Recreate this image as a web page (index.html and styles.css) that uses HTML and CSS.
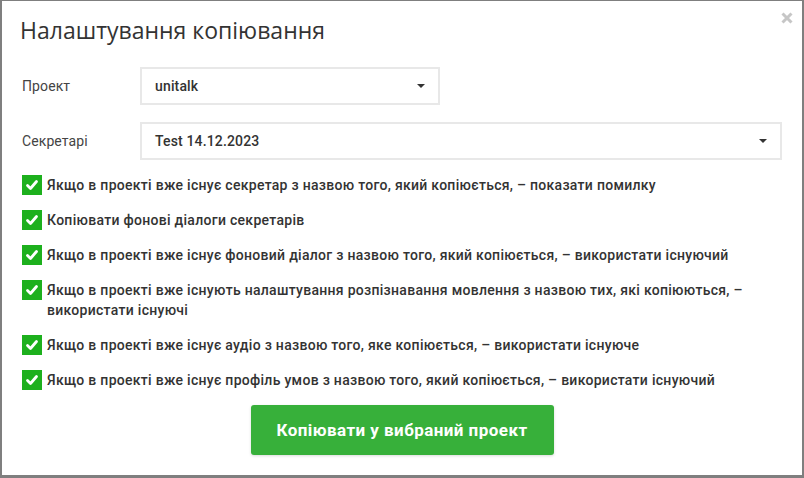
FILE: index.html
```html
<!DOCTYPE html>
<html lang="uk">
<head>
<meta charset="utf-8">
<title>Налаштування копіювання</title>
<link rel="stylesheet" href="styles.css">
</head>
<body>
<div class="modal">
  <div class="modal-header">
    <h1 class="modal-title">Налаштування копіювання</h1>
    <span class="close"><svg viewBox="0 0 12 12" width="12" height="12"><path d="M1.5 1.5l9 9M10.5 1.5l-9 9" stroke="#c6c6c6" stroke-width="3" stroke-linecap="butt"/></svg></span>
  </div>
  <div class="form-row">
    <label class="form-label">Проект</label>
    <div class="select select-short"><span>unitalk</span><i class="caret"></i></div>
  </div>
  <div class="form-row">
    <label class="form-label">Секретарі</label>
    <div class="select select-wide"><span>Test 14.12.2023</span><i class="caret"></i></div>
  </div>
  <ul class="checks">
    <li class="check"><span class="box"><svg viewBox="0 0 20 20" width="20" height="20"><path d="M5.5 10.5l3 3 6-7" fill="none" stroke="#fff" stroke-width="2.8" stroke-linecap="round" stroke-linejoin="round"/></svg></span><span class="check-text">Якщо в проекті вже існує секретар з назвою того, який копіюється, – показати помилку</span></li>
    <li class="check"><span class="box"><svg viewBox="0 0 20 20" width="20" height="20"><path d="M5.5 10.5l3 3 6-7" fill="none" stroke="#fff" stroke-width="2.8" stroke-linecap="round" stroke-linejoin="round"/></svg></span><span class="check-text">Копіювати фонові діалоги секретарів</span></li>
    <li class="check"><span class="box"><svg viewBox="0 0 20 20" width="20" height="20"><path d="M5.5 10.5l3 3 6-7" fill="none" stroke="#fff" stroke-width="2.8" stroke-linecap="round" stroke-linejoin="round"/></svg></span><span class="check-text">Якщо в проекті вже існує фоновий діалог з назвою того, який копіюється, – використати існуючий</span></li>
    <li class="check"><span class="box"><svg viewBox="0 0 20 20" width="20" height="20"><path d="M5.5 10.5l3 3 6-7" fill="none" stroke="#fff" stroke-width="2.8" stroke-linecap="round" stroke-linejoin="round"/></svg></span><span class="check-text">Якщо в проекті вже існують налаштування розпізнавання мовлення з назвою тих, які копіюються, –<br>використати існуючі</span></li>
    <li class="check"><span class="box"><svg viewBox="0 0 20 20" width="20" height="20"><path d="M5.5 10.5l3 3 6-7" fill="none" stroke="#fff" stroke-width="2.8" stroke-linecap="round" stroke-linejoin="round"/></svg></span><span class="check-text">Якщо в проекті вже існує аудіо з назвою того, яке копіюється, – використати існуюче</span></li>
    <li class="check"><span class="box"><svg viewBox="0 0 20 20" width="20" height="20"><path d="M5.5 10.5l3 3 6-7" fill="none" stroke="#fff" stroke-width="2.8" stroke-linecap="round" stroke-linejoin="round"/></svg></span><span class="check-text">Якщо в проекті вже існує профіль умов з назвою того, який копіюється, – використати існуючий</span></li>
  </ul>
  <div class="actions">
    <button class="btn">Копіювати у вибраний проект</button>
  </div>
</div>
</body>
</html>
```

FILE: styles.css
```css
* { box-sizing: border-box; }
html, body { margin: 0; padding: 0; }
body {
  background: #7f7f7f;
  font-family: Roboto, "Noto Sans", sans-serif;
  color: #333;
  width: 804px;
  height: 478px;
  overflow: hidden;
  padding: 1px 2px 0 2px;
}
.modal {
  position: relative;
  width: 800px;
  height: 474px;
  background: #fff;
  padding: 0 20px;
}
.modal-header {
  height: 66px;
  display: flex;
  align-items: center;
}
.modal-title {
  margin: 0 0 0 -2px;
  margin-top: -9px;
  font-family: "Open Sans", "Liberation Sans", sans-serif;
  font-weight: 400;
  font-size: 23px;
  color: #333;
  line-height: 30px;
}
.close {
  position: absolute;
  right: 9px;
  top: 11px;
  width: 12px;
  height: 12px;
}
.close svg { display: block; }
.form-row {
  display: flex;
  align-items: center;
  margin-bottom: 17px;
}
.form-label {
  width: 118px;
  font-size: 14px;
  color: #444;
  letter-spacing: 0.1px;
}
.select {
  height: 38px;
  border: 2px solid #e8e8e8;
  display: flex;
  align-items: center;
  justify-content: space-between;
  padding: 0 13px 0 13px;
  font-size: 14px;
  font-weight: 500;
  letter-spacing: 0.15px;
  color: #333;
}
.select-short { width: 300px; }
.select-wide { flex: 1; }
.caret {
  width: 0;
  height: 0;
  border-left: 4px solid transparent;
  border-right: 4px solid transparent;
  border-top: 4px solid #333;
}
.checks {
  list-style: none;
  margin: 0;
  padding: 0;
  margin-top: -2px;
}
.check {
  display: flex;
  align-items: flex-start;
  margin-bottom: 15px;
  font-size: 14px;
  font-weight: 500;
  line-height: 20px;
  letter-spacing: 0.29px;
  color: #333;
}
.box {
  flex: none;
  width: 20px;
  height: 20px;
  background: #1db01d;
  margin-right: 5px;
  display: block;
}
.box svg { display: block; }
.actions {
  display: flex;
  justify-content: center;
  margin-top: 1px;
}
.btn {
  width: 303px;
  height: 50px;
  border: none;
  border-radius: 3px;
  background: #37b03a;
  color: #fff;
  font-family: Roboto, "Noto Sans", sans-serif;
  font-size: 17px;
  font-weight: 700;
  letter-spacing: 0.45px;
  box-shadow: 0 1px 3px rgba(0,0,0,0.15);
}
```
